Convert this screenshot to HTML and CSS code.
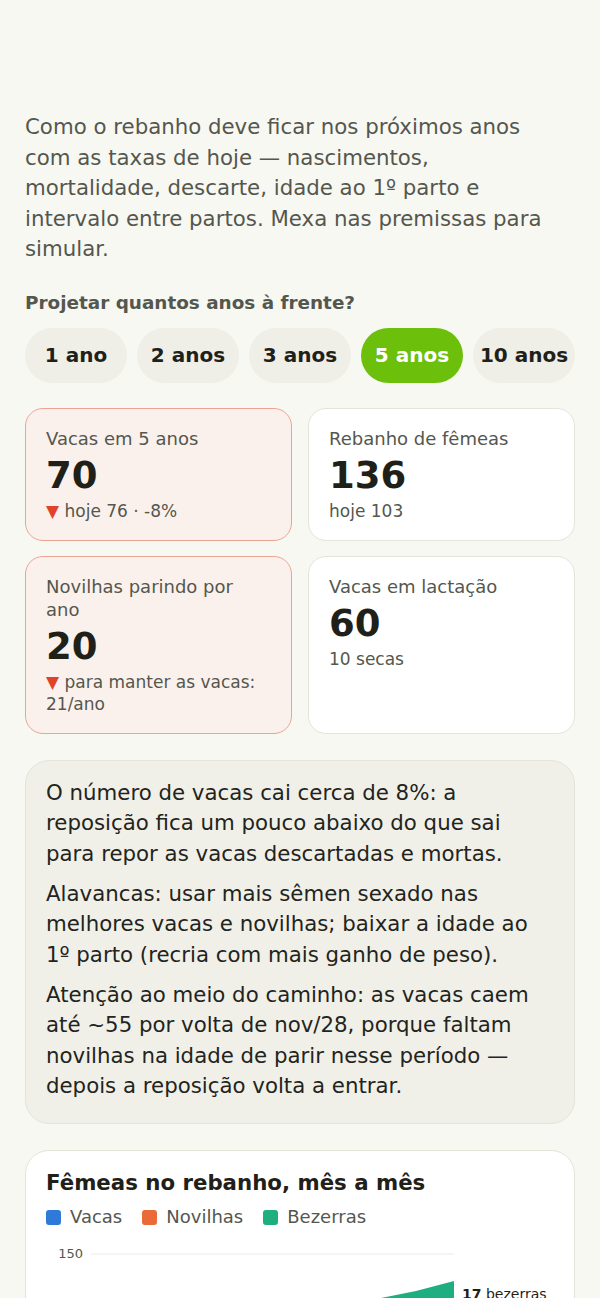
FILE: index.html
```html
<!DOCTYPE html>
<html lang="pt-BR">
<head>
  <meta charset="UTF-8" />
  <meta name="viewport" content="width=device-width, initial-scale=1.0"/>
  <title>Projeção do rebanho</title>
  <link rel="stylesheet" href="styles.css">
</head>
<body>
  <main class="page">
    <p class="intro">Como o rebanho deve ficar nos próximos anos com as taxas de hoje — nascimentos, mortalidade, descarte, idade ao 1º parto e intervalo entre partos. Mexa nas premissas para simular.</p>

    <h3 class="question">Projetar quantos anos à frente?</h3>
    <div class="years">
      <button class="year">1 ano</button>
      <button class="year">2 anos</button>
      <button class="year">3 anos</button>
      <button class="year active">5 anos</button>
      <button class="year">10 anos</button>
    </div>

    <div class="stats">
      <div class="stat alert">
        <div class="stat-label">Vacas em 5 anos</div>
        <div class="stat-value">70</div>
        <div class="stat-sub"><span class="down">▼</span> hoje 76 · -8%</div>
      </div>
      <div class="stat">
        <div class="stat-label">Rebanho de fêmeas</div>
        <div class="stat-value">136</div>
        <div class="stat-sub">hoje 103</div>
      </div>
      <div class="stat alert">
        <div class="stat-label">Novilhas parindo por ano</div>
        <div class="stat-value">20</div>
        <div class="stat-sub"><span class="down">▼</span> para manter as vacas: 21/ano</div>
      </div>
      <div class="stat">
        <div class="stat-label">Vacas em lactação</div>
        <div class="stat-value">60</div>
        <div class="stat-sub">10 secas</div>
      </div>
    </div>

    <div class="note">
      <p>O número de vacas cai cerca de 8%: a reposição fica um pouco abaixo do que sai para repor as vacas descartadas e mortas.</p>
      <p>Alavancas: usar mais sêmen sexado nas melhores vacas e novilhas; baixar a idade ao 1º parto (recria com mais ganho de peso).</p>
      <p>Atenção ao meio do caminho: as vacas caem até ~55 por volta de nov/28, porque faltam novilhas na idade de parir nesse período — depois a reposição volta a entrar.</p>
    </div>

    <div class="chart-card">
      <h2>Fêmeas no rebanho, mês a mês</h2>
      <div class="legend">
        <span class="key"><i class="dot vacas"></i>Vacas</span>
        <span class="key"><i class="dot novilhas"></i>Novilhas</span>
        <span class="key"><i class="dot bezerras"></i>Bezerras</span>
      </div>
      <svg class="chart" width="510" height="300" viewBox="0 0 510 300">
        <g class="grid">
          <line x1="45" y1="15" x2="408" y2="15"/>
          <line x1="45" y1="95" x2="408" y2="95"/>
          <line x1="45" y1="175" x2="408" y2="175"/>
          <line x1="45" y1="255" x2="408" y2="255"/>
        </g>
        <g class="axis">
          <text x="37" y="19">150</text>
          <text x="37" y="99">100</text>
          <text x="37" y="179">50</text>
          <text x="37" y="259">0</text>
        </g>
        <path fill="#1fae80" d="M45 90 L100 82 L160 79 L220 76 L280 69 L330 60 L370 52 L408 42 L408 69 L370 76 L330 84 L280 96 L220 104 L160 106 L100 104 L45 100 Z"/>
        <path fill="#ea6a38" d="M45 100 L100 104 L160 106 L220 104 L280 96 L330 84 L370 76 L408 69 L408 143 L370 146 L330 152 L280 162 L220 167 L160 158 L100 145 L45 133 Z"/>
        <path fill="#2f7ad8" d="M45 133 L100 145 L160 158 L220 167 L280 162 L330 152 L370 146 L408 143 L408 255 L45 255 Z"/>
        <g class="end-labels">
          <text x="416" y="60"><tspan class="b">17</tspan> bezerras</text>
          <text x="416" y="110"><tspan class="b">46</tspan> novilhas</text>
          <text x="416" y="200"><tspan class="b">70</tspan> vacas</text>
        </g>
      </svg>
    </div>
  </main>
</body>
</html>
```

FILE: styles.css
```css
* {
  margin: 0;
  padding: 0;
  box-sizing: border-box;
  font-family: 'DejaVu Sans', sans-serif;
}

body {
  background: #f8f8f3;
  color: #1f2119;
}

.page {
  padding: 112px 25px 40px;
}

.intro {
  max-width: 540px;
  font-size: 21.3px;
  line-height: 30.5px;
  color: #54574e;
}

.question {
  margin-top: 26px;
  font-size: 18.4px;
  line-height: 24px;
  color: #54574e;
}

.years {
  display: grid;
  grid-template-columns: repeat(5, 1fr);
  gap: 10px;
  margin-top: 13px;
}

.year {
  height: 55px;
  border: none;
  border-radius: 28px;
  background: #efefe8;
  color: #1f2119;
  font-size: 20px;
  font-weight: bold;
}

.year.active {
  background: #6cbf0a;
  color: #fff;
}

.stats {
  display: grid;
  grid-template-columns: 1fr 1fr;
  gap: 15px 16px;
  margin-top: 25px;
}

.stat {
  background: #fff;
  border: 1.5px solid #e4e4da;
  border-radius: 18px;
  padding: 18px 20px 18px;
}

.stat.alert {
  background: #fbf1ec;
  border-color: #eba493;
}

.stat-label {
  font-size: 18px;
  line-height: 23px;
  color: #54574e;
}

.stat-value {
  margin-top: 4px;
  font-size: 37px;
  line-height: 44px;
  font-weight: bold;
  color: #1f2119;
}

.stat-sub {
  margin-top: 2px;
  font-size: 17px;
  line-height: 22px;
  color: #54574e;
}

.down {
  color: #e0432b;
}

.note {
  margin-top: 26px;
  background: #f1f0e8;
  border: 1.5px solid #e5e4d9;
  border-radius: 24px;
  padding: 17px 20px 21px;
}

.note p {
  font-size: 21.3px;
  line-height: 30.5px;
  color: #22241d;
}

.note p + p {
  margin-top: 9.5px;
}

.chart-card {
  margin-top: 26px;
  background: #fff;
  border: 1.5px solid #e5e4d9;
  border-radius: 24px;
  padding: 18.5px 20px 20px;
}

.chart-card h2 {
  font-size: 21.3px;
  line-height: 28px;
  color: #1f2119;
}

.legend {
  display: flex;
  gap: 20px;
  margin-top: 7px;
  font-size: 18px;
  line-height: 26px;
  color: #54574e;
}

.key {
  display: flex;
  align-items: center;
  gap: 9px;
}

.dot {
  width: 15px;
  height: 15px;
  border-radius: 3px;
}

.dot.vacas { background: #2f7ad8; }
.dot.novilhas { background: #ea6a38; }
.dot.bezerras { background: #1fae80; }

.chart {
  display: block;
  margin-top: 9px;
}

.grid line {
  stroke: #ebebe3;
  stroke-width: 1;
}

.axis text {
  font-size: 13px;
  fill: #54574e;
  text-anchor: end;
}

.end-labels text {
  font-size: 14px;
  fill: #1f2119;
}

.end-labels .b {
  font-weight: bold;
}
```
